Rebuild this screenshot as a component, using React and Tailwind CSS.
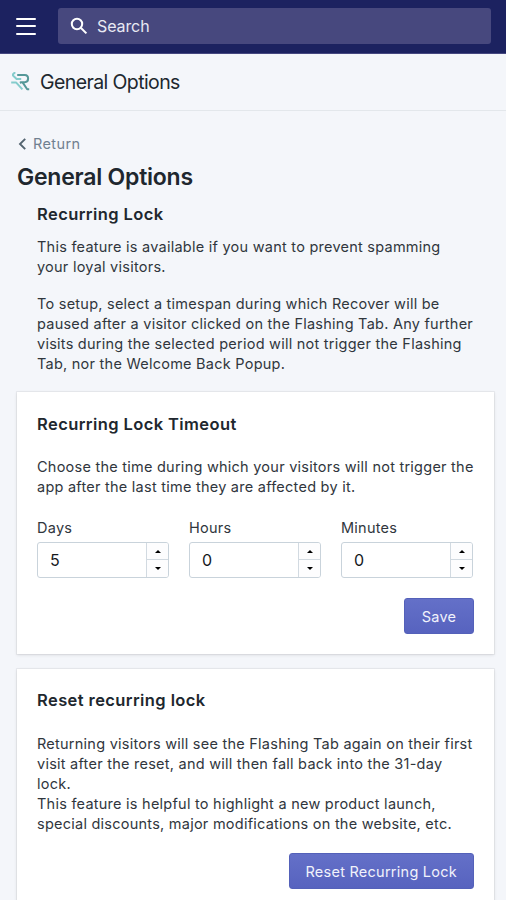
// src/pages/GeneralOptions.jsx
import React, { useState } from 'react';

function AppLogo() {
  return (
    <svg className="block h-5 w-5" viewBox="0 0 20 20" fill="none" strokeWidth="2" strokeLinejoin="round">
      <path d="M5.2 .2 3 2.2v1.4l3.6 3.4h4.6" stroke="#84cccc" />
      <path d="M1.2 10.4h4.8l6.4 7" stroke="#84cccc" />
      <path d="M7.2 3h7.6c4.4 0 4.4 7.2 0 7.2h-4.2l.8 1.2" stroke="#559898" />
      <path d="m12.6 10.4 4.6 6.9h2" stroke="#559898" />
    </svg>
  );
}

function TopBar() {
  return (
    <header className="flex h-[54px] items-start border-b border-[#454780] bg-[#1c2260] pl-4 pt-2">
      <button type="button" className="mt-[9.5px] flex w-5 flex-col gap-[5.5px]" aria-label="Menu">
        <span className="h-[2px] w-full rounded bg-white" />
        <span className="h-[2px] w-full rounded bg-white" />
        <span className="h-[2px] w-full rounded bg-white" />
      </button>
      <div className="ml-[22px] flex h-9 w-[432.5px] items-center rounded-[3px] bg-[#47487e] pl-3 text-white">
        <svg className="h-[18px] w-[18px]" viewBox="0 0 18 18" fill="none" stroke="currentColor" strokeWidth="2">
          <circle cx="7" cy="7" r="5.2" />
          <path d="m11 11 5.4 5.4" />
        </svg>
        <span className="ml-[9px] text-base tracking-[-0.1px] text-[#e8e9f3]">Search</span>
      </div>
    </header>
  );
}

function NumberField({ label, initial }) {
  const [value, setValue] = useState(initial);

  return (
    <div className="w-[132px]">
      <label className="block h-5 leading-5">{label}</label>
      <div className="mt-1 flex h-9 overflow-hidden rounded-[3px] border border-[#c9d3db] bg-white">
        <div className="flex-1 pl-3 text-base leading-[34px] text-[#15191d]">{value}</div>
        <div className="flex w-[22px] flex-col border-l border-[#d2dae1]">
          <button
            type="button"
            onClick={() => setValue(value + 1)}
            className="flex h-[17px] items-center justify-center border-b border-[#d2dae1] bg-[#fdfdfe]"
          >
            <svg className="h-[3px] w-[6px]" viewBox="0 0 6 3"><path d="M0 3 3 0l3 3z" /></svg>
          </button>
          <button
            type="button"
            onClick={() => setValue(Math.max(0, value - 1))}
            className="flex flex-1 items-center justify-center bg-[#fdfdfe]"
          >
            <svg className="h-[3px] w-[6px]" viewBox="0 0 6 3"><path d="M0 0h6L3 3z" /></svg>
          </button>
        </div>
      </div>
    </div>
  );
}

function PrimaryButton({ children }) {
  return (
    <button
      type="button"
      className="h-9 min-w-[70px] rounded-[3px] border border-[#5461b9] bg-linear-to-b from-[#6470c8] to-[#5763bf] px-4 pt-px tracking-[0.25px] text-[#f1f2fb]"
    >
      {children}
    </button>
  );
}

function Card({ title, className, children }) {
  return (
    <section className={`bg-white px-5 shadow-[0_0_0_1px_rgba(63,63,68,0.06),0_1px_3px_0_rgba(63,63,68,0.15)] ${className}`}>
      <h3 className="text-[16.5px] font-semibold leading-6 tracking-[0.41px] text-[#20272e]">{title}</h3>
      {children}
    </section>
  );
}

export default function App() {
  return (
    <div className="h-[900px] w-[506px] overflow-hidden whitespace-nowrap bg-[#f4f6fa] font-['Inter','Liberation_Sans',sans-serif] text-[14.5px] leading-5 tracking-[0.245px] text-[#30363d]">
      <TopBar />
      <div className="flex h-[57px] items-center border-b border-[#e3e7eb] pl-[10px]">
        <AppLogo />
        <span className="ml-[10px] text-[19.5px] tracking-[-0.6px] text-[#20272e]">General Options</span>
      </div>

      <main className="pl-[17px] pt-[23px]">
        <a className="flex h-5 items-center text-[#708090]">
          <svg className="ml-[1px] h-3 w-[8px]" viewBox="0 0 8 12" fill="none" stroke="#53636f" strokeWidth="1.9">
            <path d="M7.2 .8 2 6l5.2 5.2" />
          </svg>
          <span className="ml-[7px] tracking-[0.4px]">Return</span>
        </a>
        <h1 className="mt-[9px] text-[23px] font-semibold leading-7 tracking-[-0.23px] text-[#20272e]">General Options</h1>

        <div className="ml-5 mt-[11px]">
          <h2 className="text-[16.5px] font-semibold leading-6 tracking-[0.41px] text-[#20272e]">Recurring Lock</h2>
          <p className="mt-[11px]">
            This feature is available if you want to prevent spamming<br />
            your loyal visitors.
          </p>
          <p className="mt-[17px]">
            To setup, select a timespan during which Recover will be<br />
            paused after a visitor clicked on the Flashing Tab. Any further<br />
            visits during the selected period will not trigger the Flashing<br />
            Tab, nor the Welcome Back Popup.
          </p>
        </div>

        <Card title="Recurring Lock Timeout" className="mt-[18px] h-[262px] w-[477px] pt-5">
          <p className="mt-[21px]">
            Choose the time during which your visitors will not trigger the<br />
            app after the last time they are affected by it.
          </p>
          <div className="mt-[21px] flex gap-5">
            <NumberField label="Days" initial={5} />
            <NumberField label="Hours" initial={0} />
            <NumberField label="Minutes" initial={0} />
          </div>
          <div className="mt-5 flex justify-end">
            <PrimaryButton>Save</PrimaryButton>
          </div>
        </Card>

        <Card title="Reset recurring lock" className="mt-[15px] h-[262px] w-[477px] pt-[19px]">
          <p className="mt-[22px]">
            Returning visitors will see the Flashing Tab again on their first<br />
            visit after the reset, and will then fall back into the 31-day<br />
            lock.<br />
            This feature is helpful to highlight a new product launch,<br />
            special discounts, major modifications on the website, etc.
          </p>
          <div className="mt-[19px] flex justify-end">
            <PrimaryButton>Reset Recurring Lock</PrimaryButton>
          </div>
        </Card>
      </main>
    </div>
  );
}
